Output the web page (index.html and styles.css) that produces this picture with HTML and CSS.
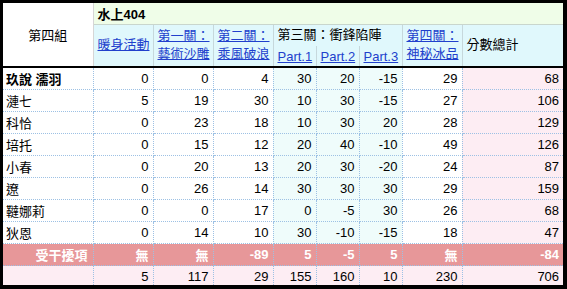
FILE: index.html
```html
<!DOCTYPE html>
<html lang="zh-Hant">
<head>
<meta charset="utf-8">
<title>水上404</title>
<link rel="stylesheet" href="styles.css">
</head>
<body>
<div class="frame">
<table class="score">
<colgroup>
<col class="c-name"><col class="c-std"><col class="c-std"><col class="c-std"><col class="c-part"><col class="c-part"><col class="c-part"><col class="c-std"><col class="c-total">
</colgroup>
<thead>
<tr class="h1">
<th rowspan="3" class="group">第四組</th>
<th colspan="8" class="venue">水上404</th>
</tr>
<tr class="h2">
<th rowspan="2" class="hd"><a href="#">暖身活動</a></th>
<th rowspan="2" class="hd"><a href="#">第一關：<br>藝術沙雕</a></th>
<th rowspan="2" class="hd"><a href="#">第二關：<br>乘風破浪</a></th>
<th colspan="3" class="hd stage3">第三關：衝鋒陷陣</th>
<th rowspan="2" class="hd"><a href="#">第四關：<br>神秘冰品</a></th>
<th rowspan="2" class="hd sumh">分數總計</th>
</tr>
<tr class="h3">
<th class="hd part-h"><a href="#">Part.1</a></th>
<th class="hd part-h"><a href="#">Part.2</a></th>
<th class="hd part-h"><a href="#">Part.3</a></th>
</tr>
</thead>
<tbody>
<tr class="first"><td class="name lead">玖說 濡羽</td><td>0</td><td>0</td><td>4</td><td class="p">30</td><td class="p">20</td><td class="p">-15</td><td>29</td><td class="t">68</td></tr>
<tr><td class="name">漣七</td><td>5</td><td>19</td><td>30</td><td class="p">10</td><td class="p">30</td><td class="p">-15</td><td>27</td><td class="t">106</td></tr>
<tr><td class="name">科恰</td><td>0</td><td>23</td><td>18</td><td class="p">10</td><td class="p">30</td><td class="p">20</td><td>28</td><td class="t">129</td></tr>
<tr><td class="name">培托</td><td>0</td><td>15</td><td>12</td><td class="p">20</td><td class="p">40</td><td class="p">-10</td><td>49</td><td class="t">126</td></tr>
<tr><td class="name">小春</td><td>0</td><td>20</td><td>13</td><td class="p">20</td><td class="p">30</td><td class="p">-20</td><td>24</td><td class="t">87</td></tr>
<tr><td class="name">遼</td><td>0</td><td>26</td><td>14</td><td class="p">30</td><td class="p">30</td><td class="p">30</td><td>29</td><td class="t">159</td></tr>
<tr><td class="name">韃娜莉</td><td>0</td><td>0</td><td>17</td><td class="p">0</td><td class="p">-5</td><td class="p">30</td><td>26</td><td class="t">68</td></tr>
<tr><td class="name">狄恩</td><td>0</td><td>14</td><td>10</td><td class="p">30</td><td class="p">-10</td><td class="p">-15</td><td>18</td><td class="t">47</td></tr>
<tr class="interf"><td class="name">受干擾項</td><td>無</td><td>無</td><td>-89</td><td>5</td><td>-5</td><td>5</td><td>無</td><td>-84</td></tr>
<tr class="totals"><td class="name"></td><td>5</td><td>117</td><td>29</td><td>155</td><td>160</td><td>10</td><td>230</td><td>706</td></tr>
</tbody>
</table>
</div>
</body>
</html>
```

FILE: styles.css
```css
html, body {
  margin: 0;
  padding: 0;
  background: #000;
}

.frame {
  margin: 3px 0 0 3px;
  width: 560px;
  height: 282px;
  overflow: hidden;
  background: #fff;
}

.score {
  border-collapse: collapse;
  table-layout: fixed;
  width: 560px;
  font-family: "Liberation Sans", "Noto Sans CJK TC", sans-serif;
  font-size: 13px;
  color: #000;
}

.c-name { width: 90px; }
.c-std { width: 60px; }
.c-part { width: 43px; }
.c-total { width: 101px; }

.score th,
.score td {
  padding: 0;
}

.score th {
  font-weight: normal;
  text-align: left;
  vertical-align: middle;
}

.score a {
  color: #2140cc;
  text-decoration: underline;
}

.h1 { height: 21px; }
.h2 { height: 22px; }
.h3 { height: 20px; }

.group {
  background: #fff;
  text-align: center !important;
  border-right: 1px solid #d6d6d6;
  border-bottom: 2px solid #000;
}

.venue {
  background: #effde8;
  font-weight: bold !important;
  padding-left: 4px !important;
  border-bottom: 1px solid #c9d6cd;
}

.hd {
  background: #e0f8fc;
  padding: 0 3px 0 4px !important;
  line-height: 18px;
  border-right: 1px solid #c6d8dc;
  border-bottom: 2px solid #000;
}

.stage3 {
  border-bottom: none;
}

.part-h {
  padding-top: 2px !important;
}

.sumh {
  border-right: none;
}

.score td {
  height: 21px;
  text-align: right;
  padding-right: 4px;
  vertical-align: middle;
  border-right: 1px dotted #9dc1e4;
  border-bottom: 1px dotted #9dc1e4;
}

.score td:last-child {
  border-right: none;
}

.score td.name {
  text-align: left;
  padding-left: 3px;
  padding-right: 0;
}

.name.lead {
  font-weight: bold;
}

.score td.p {
  background: #effcfb;
}

.score td.t {
  background: #fdedf3;
}

.interf td {
  background: #e79799;
  color: #fff;
  font-weight: bold;
}

.interf td.name {
  text-align: right;
  padding-right: 5px;
}

.totals td {
  background: #fdedf3;
  border-bottom: none;
}
```
